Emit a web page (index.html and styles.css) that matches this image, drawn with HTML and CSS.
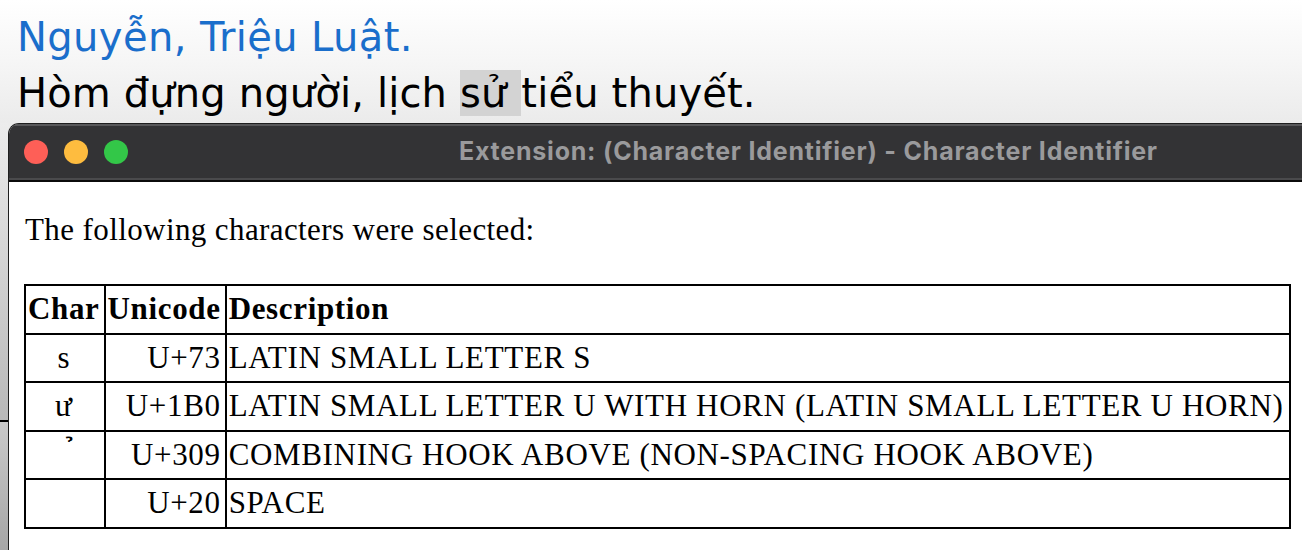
FILE: index.html
```html
<!DOCTYPE html>
<html>
<head>
<meta charset="utf-8">
<link rel="stylesheet" href="styles.css">
</head>
<body>
<div class="page">
  <div class="doc">
    <div class="author">Nguyễn, Triệu Luật.</div>
    <div class="title">Hòm đựng người, lịch <span class="sel">sử </span>tiểu thuyết.</div>
  </div>
  <div class="desk">
    <div class="behind">
      <div class="behind-top"></div>
      <div class="behind-bottom"></div>
    </div>
    <div class="window">
      <div class="titlebar">
        <div class="lights">
          <span class="light red"></span>
          <span class="light yellow"></span>
          <span class="light green"></span>
        </div>
        <div class="wtitle">Extension: (Character Identifier) - Character Identifier</div>
      </div>
      <div class="content">
        <p class="intro">The following characters were selected:</p>
        <table class="chars">
          <tr><th>Char</th><th>Unicode</th><th class="desc">Description</th></tr>
          <tr><td class="c">s</td><td class="u">U+73</td><td>LATIN SMALL LETTER S</td></tr>
          <tr><td class="c">ư</td><td class="u">U+1B0</td><td>LATIN SMALL LETTER U WITH HORN (LATIN SMALL LETTER U HORN)</td></tr>
          <tr><td class="c hook">&nbsp;&#x0309;</td><td class="u">U+309</td><td>COMBINING HOOK ABOVE (NON-SPACING HOOK ABOVE)</td></tr>
          <tr><td class="c">&nbsp;</td><td class="u">U+20</td><td>SPACE</td></tr>
        </table>
      </div>
    </div>
  </div>
</div>
</body>
</html>
```
FILE: styles.css
```css
html, body {
  margin: 0;
  padding: 0;
  overflow: hidden;
}
body {
  width: 1302px;
  height: 550px;
  background: linear-gradient(#ffffff 0px, #f6f6f6 60px, #ebebeb 123px);
}
.page {
  display: flex;
  flex-direction: column;
  height: 550px;
}
.doc {
  height: 123px;
  padding: 9px 0 0 17px;
  box-sizing: border-box;
  font-family: "DejaVu Sans", Verdana, sans-serif;
  font-size: 40px;
  line-height: 56px;
  letter-spacing: 0.15px;
  white-space: nowrap;
}
.author {
  color: #1a6ecb;
  letter-spacing: 0.4px;
}
.title {
  color: #000;
}
.sel {
  background: #d3d3d3;
  padding-right: 2px;
}
.desk {
  display: flex;
  flex: 1;
}
.behind {
  width: 8px;
  display: flex;
  flex-direction: column;
}
.behind-top {
  height: 297px;
  background: linear-gradient(#ececec, #b8b8b8);
  border-bottom: 2px solid #000;
}
.behind-bottom {
  flex: 1;
  background: linear-gradient(#cacaca, #a6a6a6);
}
.window {
  flex: 1;
  display: flex;
  flex-direction: column;
  background: #fff;
  border-left: 1px solid #1e1e1e;
  border-top: 1px solid #1e1e1e;
  border-top-left-radius: 11px;
  overflow: hidden;
}
.titlebar {
  height: 52px;
  background: #333335;
  border-top: 2px solid #58585a;
  border-bottom: 2px solid #4a4a4c;
  display: flex;
  align-items: center;
}
.lights {
  display: flex;
  gap: 16px;
  padding-left: 15px;
}
.light {
  width: 24px;
  height: 24px;
  border-radius: 50%;
  display: block;
}
.red { background: #fe5f57; }
.yellow { background: #febc3f; }
.green { background: #33c748; }
.wtitle {
  margin-left: 331px;
  margin-top: -3px;
  color: #9a9a9c;
  font-family: Inter, Roboto, "Liberation Sans", sans-serif;
  font-weight: bold;
  font-size: 25px;
  letter-spacing: 0.78px;
  white-space: nowrap;
}
.content {
  border-top: 2px solid #0b0b0b;
  padding: 0 0 0 15px;
  font-family: "Liberation Serif", "Times New Roman", serif;
  font-size: 31px;
}
.intro {
  margin: 30px 0 0 1px;
  line-height: 36px;
  letter-spacing: 0.4px;
}
.chars {
  margin-top: 36px;
  border-collapse: collapse;
  border: 2px solid #000;
  width: 1267px;
  letter-spacing: 0.66px;
}
.chars th, .chars td {
  border: 2px solid #000;
  padding: 0 4px 0 2px;
  line-height: 46.6px;
  white-space: nowrap;
}
.chars th {
  text-align: left;
  font-weight: bold;
  width: 1px;
}
.chars th.desc {
  width: auto;
}
.chars td.c {
  text-align: center;
}
.chars td.hook {
  padding-left: 14px;
}
.chars td.u {
  text-align: right;
}
```
